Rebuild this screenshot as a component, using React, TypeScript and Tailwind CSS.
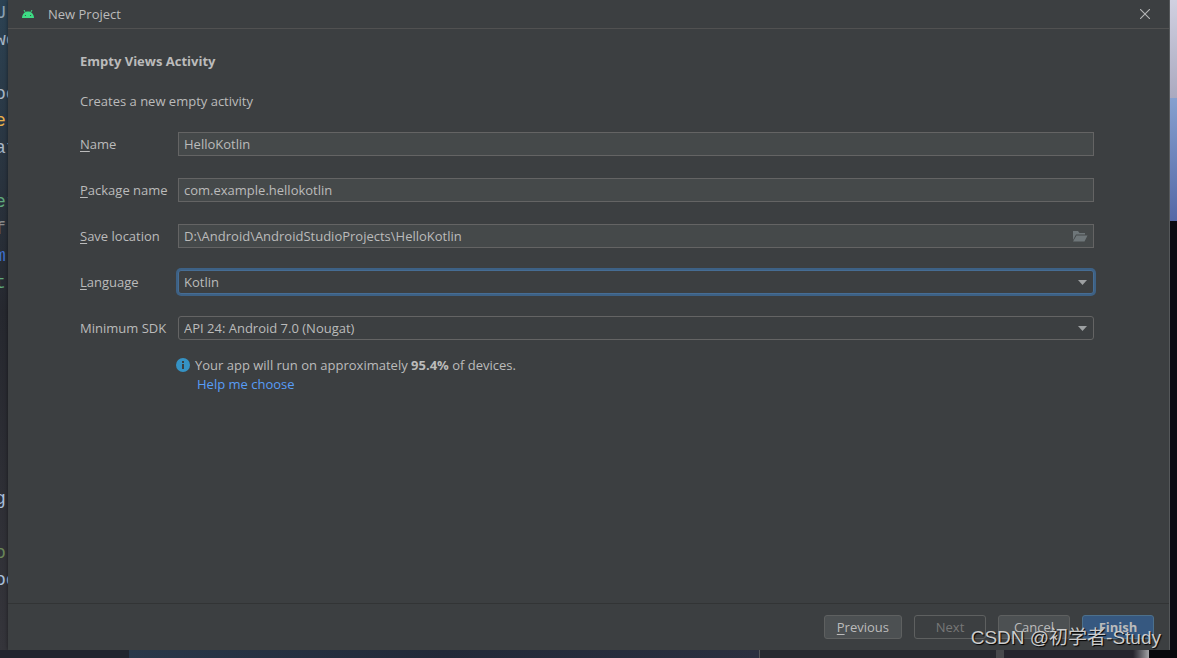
import React, { useState } from 'react';

const editorLines = [
  { text: 'U:', color: 'text-[#8fa3b3]' },
  { text: 'we', color: 'text-[#a9b7c6]' },
  { text: '', color: '' },
  { text: 'oo', color: 'text-[#a9b7c6]' },
  { text: 'e', color: 'text-[#e8b04b]' },
  { text: 'at', color: 'text-[#a9b7c6]' },
  { text: '', color: '' },
  { text: 'er', color: 'text-[#5fa97c]' },
  { text: 'f', color: 'text-[#8c8c8c]' },
  { text: 'm', color: 'text-[#3d6fd0]' },
  { text: 't:', color: 'text-[#5fa97c]' },
  { text: '', color: '' },
  { text: '', color: '' },
  { text: '', color: '' },
  { text: '', color: '' },
  { text: '', color: '' },
  { text: '', color: '' },
  { text: '', color: '' },
  { text: 'g', color: 'text-[#a9c0dc]' },
  { text: '', color: '' },
  { text: 'o', color: 'text-[#6a8759]' },
  { text: 'oo', color: 'text-[#a9c0dc]' },
];

const AndroidIcon = () => (
  <svg width="12" height="8" viewBox="0 0 12 8" aria-hidden="true">
    <path d="M2 0 L3.300 2.400 M10 0 L8.700 2.400" stroke="#3ddc84" strokeWidth="1" />
    <path d="M0 8 C0.200 4 2.600 1.500 6 1.500 C9.400 1.500 11.800 4 12 8 Z" fill="#3ddc84" />
    <circle cx="3.400" cy="5.500" r="0.600" fill="#3c3f41" />
    <circle cx="8.600" cy="5.500" r="0.600" fill="#3c3f41" />
  </svg>
);

const FolderIcon = () => (
  <svg width="16" height="12" viewBox="0 0 16 12" aria-hidden="true">
    <path d="M1 10 V1 H6 L7.500 3 H13 V4.500 H4 Z" fill="#6e7679" />
    <path d="M4.500 5.500 H15.500 L12.500 11.500 H1 Z" fill="#6e7679" />
  </svg>
);

const InfoIcon = () => (
  <svg width="14" height="14" viewBox="0 0 14 14" aria-hidden="true">
    <circle cx="7" cy="7" r="7" fill="#3592c4" />
    <path d="M6 3 H8 V5 H6 Z M6 6 H8 V11 H6 Z" fill="#3c3f41" />
  </svg>
);

const Mnemonic = ({ text }: { text: string }) => (
  <span>
    <span className="underline underline-offset-2">{text[0]}</span>
    {text.slice(1)}
  </span>
);

type FieldProps = {
  id: string;
  label: React.ReactNode;
  children: React.ReactNode;
};

const Field = ({ id, label, children }: FieldProps) => (
  <div className="flex h-6 items-center">
    <label htmlFor={id} className="w-[98px] shrink-0">{label}</label>
    <div className="relative flex-1">{children}</div>
  </div>
);

const inputClass =
  'block h-6 w-full border border-[#646464] bg-[#45494a] px-[5px] text-[#bbbbbb] outline-none';

type SelectProps = {
  id: string;
  options: string[];
  active?: boolean;
};

const Select = ({ id, options, active }: SelectProps) => (
  <>
    <select
      id={id}
      className={`block h-6 w-full appearance-none rounded-[3px] border bg-[#3c3f41] px-[5px] text-[#bbbbbb] outline-none ${
        active ? 'border-[#466d94] ring-2 ring-[#3d6185]' : 'border-[#646464]'
      }`}
    >
      {options.map((option) => (
        <option key={option}>{option}</option>
      ))}
    </select>
    <svg
      className="pointer-events-none absolute top-[10px] right-[7px]"
      width="9"
      height="5"
      viewBox="0 0 9 5"
      aria-hidden="true"
    >
      <path d="M0 0 H9 L4.500 5 Z" fill="#9da0a2" />
    </svg>
  </>
);

const buttonClass = 'h-6 min-w-[72px] rounded-[3px] border px-3';

export default function App() {
  const [name, setName] = useState('HelloKotlin');
  const [packageName, setPackageName] = useState('com.example.hellokotlin');
  const [location, setLocation] = useState('D:\\Android\\AndroidStudioProjects\\HelloKotlin');

  return (
    <div className="relative flex h-screen flex-col overflow-hidden bg-[#24262f] font-['Open_Sans',sans-serif] text-[13px] leading-5 text-[#bbbbbb]">
      <div className="flex min-h-0 flex-1">
        <div className="w-2 shrink-0 overflow-hidden bg-linear-to-b from-[#2c4354] from-0% via-[#26282f] via-48% to-[#35353b] font-['Liberation_Mono',monospace] text-lg leading-[27px]">
          {editorLines.map((line, i) => (
            <div key={i} className={`-ml-[5px] h-[27px] ${line.color}`}>{line.text}</div>
          ))}
        </div>

        <main className="flex min-w-0 flex-1 flex-col border-r border-[#55585a] bg-[#3c3f41] shadow-[0_0_4px_#00000080]">
          <header className="flex h-[29px] shrink-0 items-center border-b border-[#515151] pr-[19px] pl-[14px]">
            <AndroidIcon />
            <span className="ml-[14px] flex-1">New Project</span>
            <button aria-label="Close">
              <svg width="10" height="10" viewBox="0 0 10 10" aria-hidden="true">
                <path d="M0 0 L10 10 M10 0 L0 10" stroke="#b4b5b6" strokeWidth="1.100" />
              </svg>
            </button>
          </header>

          <section className="flex-1 pt-[22px] pr-[75px] pl-[72px]">
            <h1 className="font-bold">Empty Views Activity</h1>
            <p className="mt-5">Creates a new empty activity</p>

            <form className="mt-[21px] flex flex-col gap-[22px]">
              <Field id="name" label={<Mnemonic text="Name" />}>
                <input id="name" className={inputClass} value={name} onChange={(e) => setName(e.target.value)} />
              </Field>
              <Field id="package" label={<Mnemonic text="Package name" />}>
                <input
                  id="package"
                  className={inputClass}
                  value={packageName}
                  onChange={(e) => setPackageName(e.target.value)}
                />
              </Field>
              <Field id="location" label={<Mnemonic text="Save location" />}>
                <input
                  id="location"
                  className={inputClass}
                  value={location}
                  onChange={(e) => setLocation(e.target.value)}
                />
                <button type="button" aria-label="Browse" className="absolute top-[6px] right-[6px]">
                  <FolderIcon />
                </button>
              </Field>
              <Field id="language" label={<Mnemonic text="Language" />}>
                <Select id="language" options={['Kotlin', 'Java']} active />
              </Field>
              <Field id="sdk" label="Minimum SDK">
                <Select id="sdk" options={['API 24: Android 7.0 (Nougat)']} />
              </Field>
            </form>

            <div className="mt-[15px] ml-24 flex items-center gap-[5px]">
              <InfoIcon />
              <p>
                Your app will run on approximately <b>95.4%</b> of devices.
              </p>
            </div>
            <a href="#help" className="ml-[117px] block w-fit leading-[18px] text-[#589df6]">
              Help me choose
            </a>
          </section>

          <footer className="flex h-[47px] shrink-0 items-center justify-end gap-3 border-t border-[#323435] pr-[15px]">
            <button className={`${buttonClass} border-[#5e6060] bg-[#4c5052]`}>
              <Mnemonic text="Previous" />
            </button>
            <button disabled className={`${buttonClass} border-[#5e6060] text-[#777777]`}>
              Next
            </button>
            <button className={`${buttonClass} border-[#5e6060] bg-[#4c5052]`}>Cancel</button>
            <button className={`${buttonClass} border-[#4c708c] bg-[#365880] font-bold`}>Finish</button>
          </footer>
        </main>

        <div className="flex w-[7px] shrink-0 flex-col bg-[#0b0b13]">
          <div className="h-[15%] bg-linear-to-b from-[#d0d0e0] to-[#aaa9bf]" />
          <div className="h-[19%] bg-linear-to-b from-[#86a0cf] to-[#5568a6]" />
        </div>
      </div>

      <div className="flex h-2 shrink-0 bg-[#26242b]">
        <div className="w-[11%] bg-[#22252e]" />
        <div className="flex-1 border-r border-[#55585a] bg-linear-to-r from-[#29384a] via-[#222938] to-[#2b3040]" />
        <div className="w-[20%] bg-[#27292f]" />
        <div className="w-2 bg-[#48494c]" />
        <div className="w-[11%] bg-[#26252d]" />
        <div className="w-4 bg-linear-to-r from-[#26252d] to-[#a5a5a8]" />
        <div className="w-7 bg-[#08080c]" />
      </div>

      <div className="pointer-events-none absolute right-4 bottom-[6px] font-['Liberation_Sans','Noto_Sans_CJK_SC',sans-serif] text-[19px] leading-7 text-[#cccccc] text-shadow-[1px_1px_1px_#000000]">
        CSDN @初学者-Study
      </div>
    </div>
  );
}
